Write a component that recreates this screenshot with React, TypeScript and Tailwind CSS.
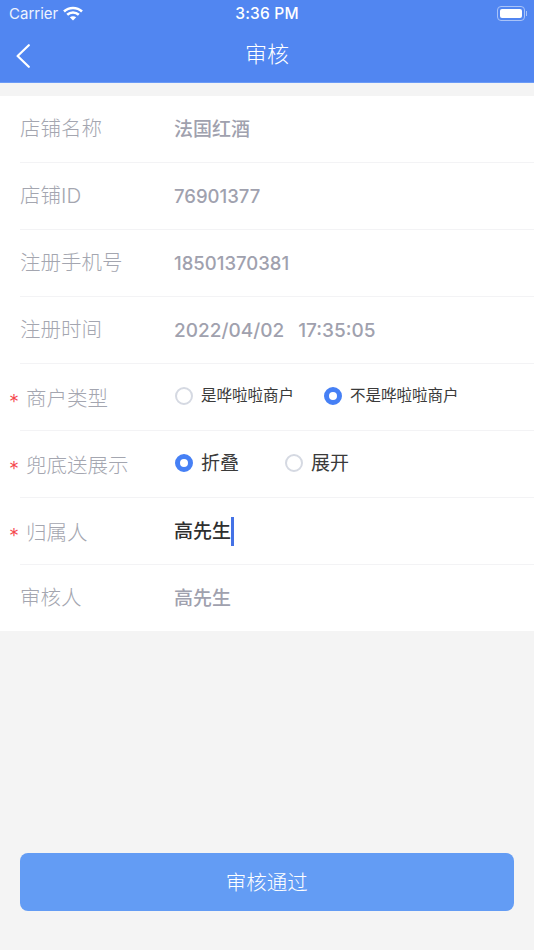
import React from 'react';

const font = { fontFamily: '"Inter", "Noto Sans CJK SC", sans-serif' };

const Radio: React.FC<{ on?: boolean }> = ({ on }) =>
  on ? (
    <span className="w-[18px] h-[18px] rounded-full border-[5px] border-[#4680f5] bg-white shrink-0" />
  ) : (
    <span className="w-[18px] h-[18px] rounded-full border-2 border-[#d5d9e2] bg-white shrink-0" />
  );

const Row: React.FC<{ label: string; required?: boolean; h?: string; children: React.ReactNode }> = ({ label, required, h = 'h-[67px]', children }) => (
  <div className={`${h} ml-5 flex items-center border-b border-[#f3f3f5] last:border-b-0`}>
    <div className="w-[155px] shrink-0 flex items-center relative text-[20.5px] text-[#a4a6b0] font-light pt-[1px]">
      {required && <span className="absolute left-[-11px] top-[9px] text-[20px] leading-[24px] text-[#f5484d]">*</span>}
      <span className={required ? 'ml-[6px] relative top-[2px]' : ''}>{label}</span>
    </div>
    {children}
  </div>
);

const Value: React.FC<{ size?: string; children: React.ReactNode }> = ({ size = 'text-[19px]', children }) => (
  <span className={`${size} font-medium text-[#a0a1ae] pt-[2px] ml-[-1px]`}>{children}</span>
);

export default function App() {
  return (
    <div className="w-[534px] h-[950px] bg-[#f4f4f4] flex flex-col overflow-hidden" style={font}>
      <header className="h-[83px] bg-[#5186f1] border-b border-[#6b9bf7] text-white shrink-0">
        <div className="h-[28px] px-[9px] flex items-center justify-between relative">
          <div className="flex items-center gap-[5px]">
            <span className="text-[15px] text-[#eef3fe]">Carrier</span>
            <svg width="20" height="15" viewBox="0 0 20 15" fill="none" className="mb-[1px]">
              <path d="M1 5.5C6 .8 14 .8 19 5.5" stroke="white" strokeWidth="2.6" />
              <path d="M4.2 8.8c3.3-3 8.3-3 11.6 0" stroke="white" strokeWidth="2.6" />
              <path d="M10 14.5 6.8 11.3c1.8-1.5 4.6-1.5 6.4 0z" fill="white" />
            </svg>
          </div>
          <span className="absolute left-0 right-0 text-center text-[15.5px] font-medium tracking-[0.2px]">3:36 PM</span>
          <div className="flex items-center mr-[-2px] mb-[1px]">
            <div className="w-[28px] h-[15px] rounded-[4px] border border-[#a9c3f8] p-[2px]">
              <div className="w-full h-full bg-white rounded-[2px]" />
            </div>
            <div className="w-[1px] h-[5px] bg-[#a9c3f8] ml-[1px]" />
          </div>
        </div>
        <div className="h-[54px] relative flex items-center justify-center">
          <svg width="14" height="24" viewBox="0 0 14 24" fill="none" className="absolute left-[16px] top-[16px]">
            <path d="M12.8 1.2 1.6 12l11.2 10.8" stroke="white" strokeWidth="2.2" strokeLinecap="round" strokeLinejoin="round" />
          </svg>
          <span className="text-[22px] font-light relative top-[-1px]">审核</span>
        </div>
      </header>

      <main className="mt-[13px] bg-white flex flex-col shrink-0">
        <Row label="店铺名称"><Value>法国红酒</Value></Row>
        <Row label="店铺ID"><Value size="text-[18.5px]">76901377</Value></Row>
        <Row label="注册手机号"><Value size="text-[18.5px]">18501370381</Value></Row>
        <Row label="注册时间">
          <Value>2022/04/02<span className="ml-[14px]">17:35:05</span></Value>
        </Row>
        <Row label="商户类型" required>
          <div className="flex items-center text-[15.5px] text-[#3a3a3a] pb-[2px]">
            <Radio />
            <span className="ml-[8px]">是哗啦啦商户</span>
            <span className="ml-[30px] flex items-center"><Radio on /></span>
            <span className="ml-[8px]">不是哗啦啦商户</span>
          </div>
        </Row>
        <Row label="兜底送展示" required>
          <div className="flex items-center text-[19px] text-[#3a3a3a] pb-[2px]">
            <Radio on />
            <span className="ml-[8px] relative top-[1px]">折叠</span>
            <span className="ml-[46px] flex items-center"><Radio /></span>
            <span className="ml-[8px] relative top-[1px]">展开</span>
          </div>
        </Row>
        <Row label="归属人" required>
          <div className="flex items-center text-[19px] font-medium text-[#2f2f2f] relative left-[-1px]">
            <span className="relative top-[1px]">高先生</span>
            <span className="w-[3px] h-[29px] bg-[#4472e6]" />
          </div>
        </Row>
        <Row label="审核人" h="h-[66px]"><Value>高先生</Value></Row>
      </main>

      <div className="flex-1" />
      <button className="ml-[19.5px] mr-[20px] mb-[39px] h-[58px] rounded-[8px] bg-[#639cf4] text-white text-[20.5px] font-light shrink-0 pt-[2px]">审核通过</button>
    </div>
  );
}
